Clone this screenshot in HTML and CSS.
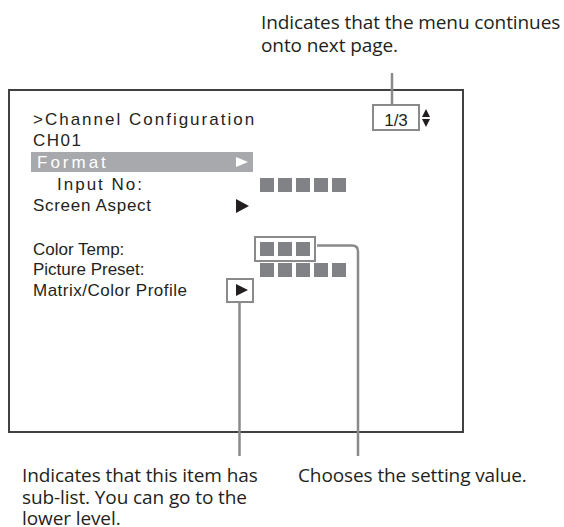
FILE: index.html
```html
<!DOCTYPE html>
<html lang="en">
<head>
  <meta charset="UTF-8" />
  <title>Channel Configuration menu</title>
  <link rel="stylesheet" href="styles.css">
</head>
<body>
  <div class="page">
    <p class="note note-top">Indicates that the menu continues<br>onto next page.</p>

    <div class="screen">
      <div class="page-no"><span class="page-box">1/3</span><span class="updown"><i class="up"></i><i class="down"></i></span></div>

      <div class="menu">
        <div class="row title">&gt;Channel Configuration</div>
        <div class="row ch">CH01</div>
        <div class="row sel">
          <span class="label">Format</span>
          <span class="tri white"></span>
        </div>
        <div class="row">
          <span class="label sub">Input No:</span>
          <span class="val"><i></i><i></i><i></i><i></i><i></i></span>
        </div>
        <div class="row">
          <span class="label aspect">Screen Aspect</span>
          <span class="tri"></span>
        </div>

        <div class="row low first">
          <span class="label">Color Temp:</span>
          <span class="val boxed"><i></i><i></i><i></i></span>
        </div>
        <div class="row low">
          <span class="label">Picture Preset:</span>
          <span class="val"><i></i><i></i><i></i><i></i><i></i></span>
        </div>
        <div class="row low">
          <span class="label matrix">Matrix/Color Profile</span>
          <span class="tri-box"><span class="tri"></span></span>
        </div>
      </div>
    </div>

    <div class="notes-bottom">
      <p class="note note-sub">Indicates that this item has<br>sub-list. You can go to the<br>lower level.</p>
      <p class="note note-value">Chooses the setting value.</p>
    </div>

    <!-- callout lines -->
    <svg class="leaders" width="564" height="527" viewBox="0 0 564 527">
      <path d="M392 73 V104" />
      <path d="M239.5 302 V456" />
      <path d="M317 245.5 H352 Q358 245.5 358 251.5 V456" />
    </svg>
  </div>
</body>
</html>
```

FILE: styles.css
```css
body {
  margin: 0;
  background: #fff;
}
.page {
  position: relative;
  width: 564px;
  height: 527px;
  overflow: hidden;
  color: #231f20;
}
.note {
  margin: 0;
  font-family: "Open Sans", sans-serif;
  font-size: 19px;
  line-height: 21.5px;
  letter-spacing: -0.1px;
  white-space: nowrap;
  color: #231f20;
}
.note-top {
  margin-left: 261px;
  padding-top: 11px;
  line-height: 23px;
}
.screen {
  position: relative;
  box-sizing: border-box;
  margin: 32px 0 0 8px;
  width: 456px;
  height: 344px;
  border: 2px solid #414042;
  font-family: "Liberation Sans", Arial, sans-serif;
  font-size: 17px;
}
.page-no {
  position: absolute;
  top: 13px;
  left: 362px;
  display: flex;
  align-items: center;
}
.page-box {
  box-sizing: border-box;
  width: 48px;
  height: 27px;
  padding-top: 5px;
  border: 2.5px solid #8a8a8c;
  text-align: center;
  line-height: 19px;
}
.updown {
  display: flex;
  flex-direction: column;
  gap: 2px;
  margin-left: 2px;
}
.updown i {
  width: 0;
  height: 0;
  border-left: 4.5px solid transparent;
  border-right: 4.5px solid transparent;
}
.updown .up {
  border-bottom: 8px solid #231f20;
}
.updown .down {
  border-top: 8px solid #231f20;
}
.menu {
  padding: 18px 0 0 23px;
}
.row {
  display: flex;
  align-items: center;
  height: 21px;
  line-height: 21px;
  white-space: nowrap;
}
.label {
  width: 203px;
}
.title {
  letter-spacing: 2px;
}
.ch {
  letter-spacing: 1.5px;
}
.sel {
  margin: 1px 0 2px -2px;
  padding-left: 6px;
  width: 216px;
  height: 20px;
  background: #a7a9ac;
  color: #fff;
  letter-spacing: 3px;
}
.sel .label {
  width: 199px;
}
.sub {
  padding-left: 24px;
  width: 179px;
  letter-spacing: 2px;
}
.aspect {
  letter-spacing: 0.7px;
}
.matrix {
  letter-spacing: 0.5px;
}
.tri {
  width: 0;
  height: 0;
  border-top: 7px solid transparent;
  border-bottom: 7px solid transparent;
  border-left: 13px solid #231f20;
}
.tri.white {
  border-left-color: #fff;
  border-top-width: 5.5px;
  border-bottom-width: 5.5px;
  border-left-width: 12px;
}
.val {
  display: flex;
  gap: 4px;
  margin-left: 24px;
}
.val i {
  width: 14px;
  height: 14px;
  background: #808285;
}
.boxed {
  outline: 2.5px solid #8a8a8c;
  outline-offset: 4px;
}
.low {
  height: 20.5px;
}
.low.first {
  margin-top: 23px;
}
.tri-box {
  box-sizing: border-box;
  display: flex;
  align-items: center;
  justify-content: center;
  margin-left: -10px;
  width: 28px;
  height: 25px;
  padding-left: 3px;
  border: 2.5px solid #8a8a8c;
}
.tri-box .tri {
  border-top-width: 6px;
  border-bottom-width: 6px;
  border-left-width: 12px;
}
.notes-bottom {
  display: flex;
  margin-top: 32px;
  padding-left: 22px;
}
.note-sub {
  width: 276px;
}
.leaders {
  position: absolute;
  top: 0;
  left: 0;
}
.leaders path {
  fill: none;
  stroke: #8a8a8c;
  stroke-width: 2.5;
}
```
